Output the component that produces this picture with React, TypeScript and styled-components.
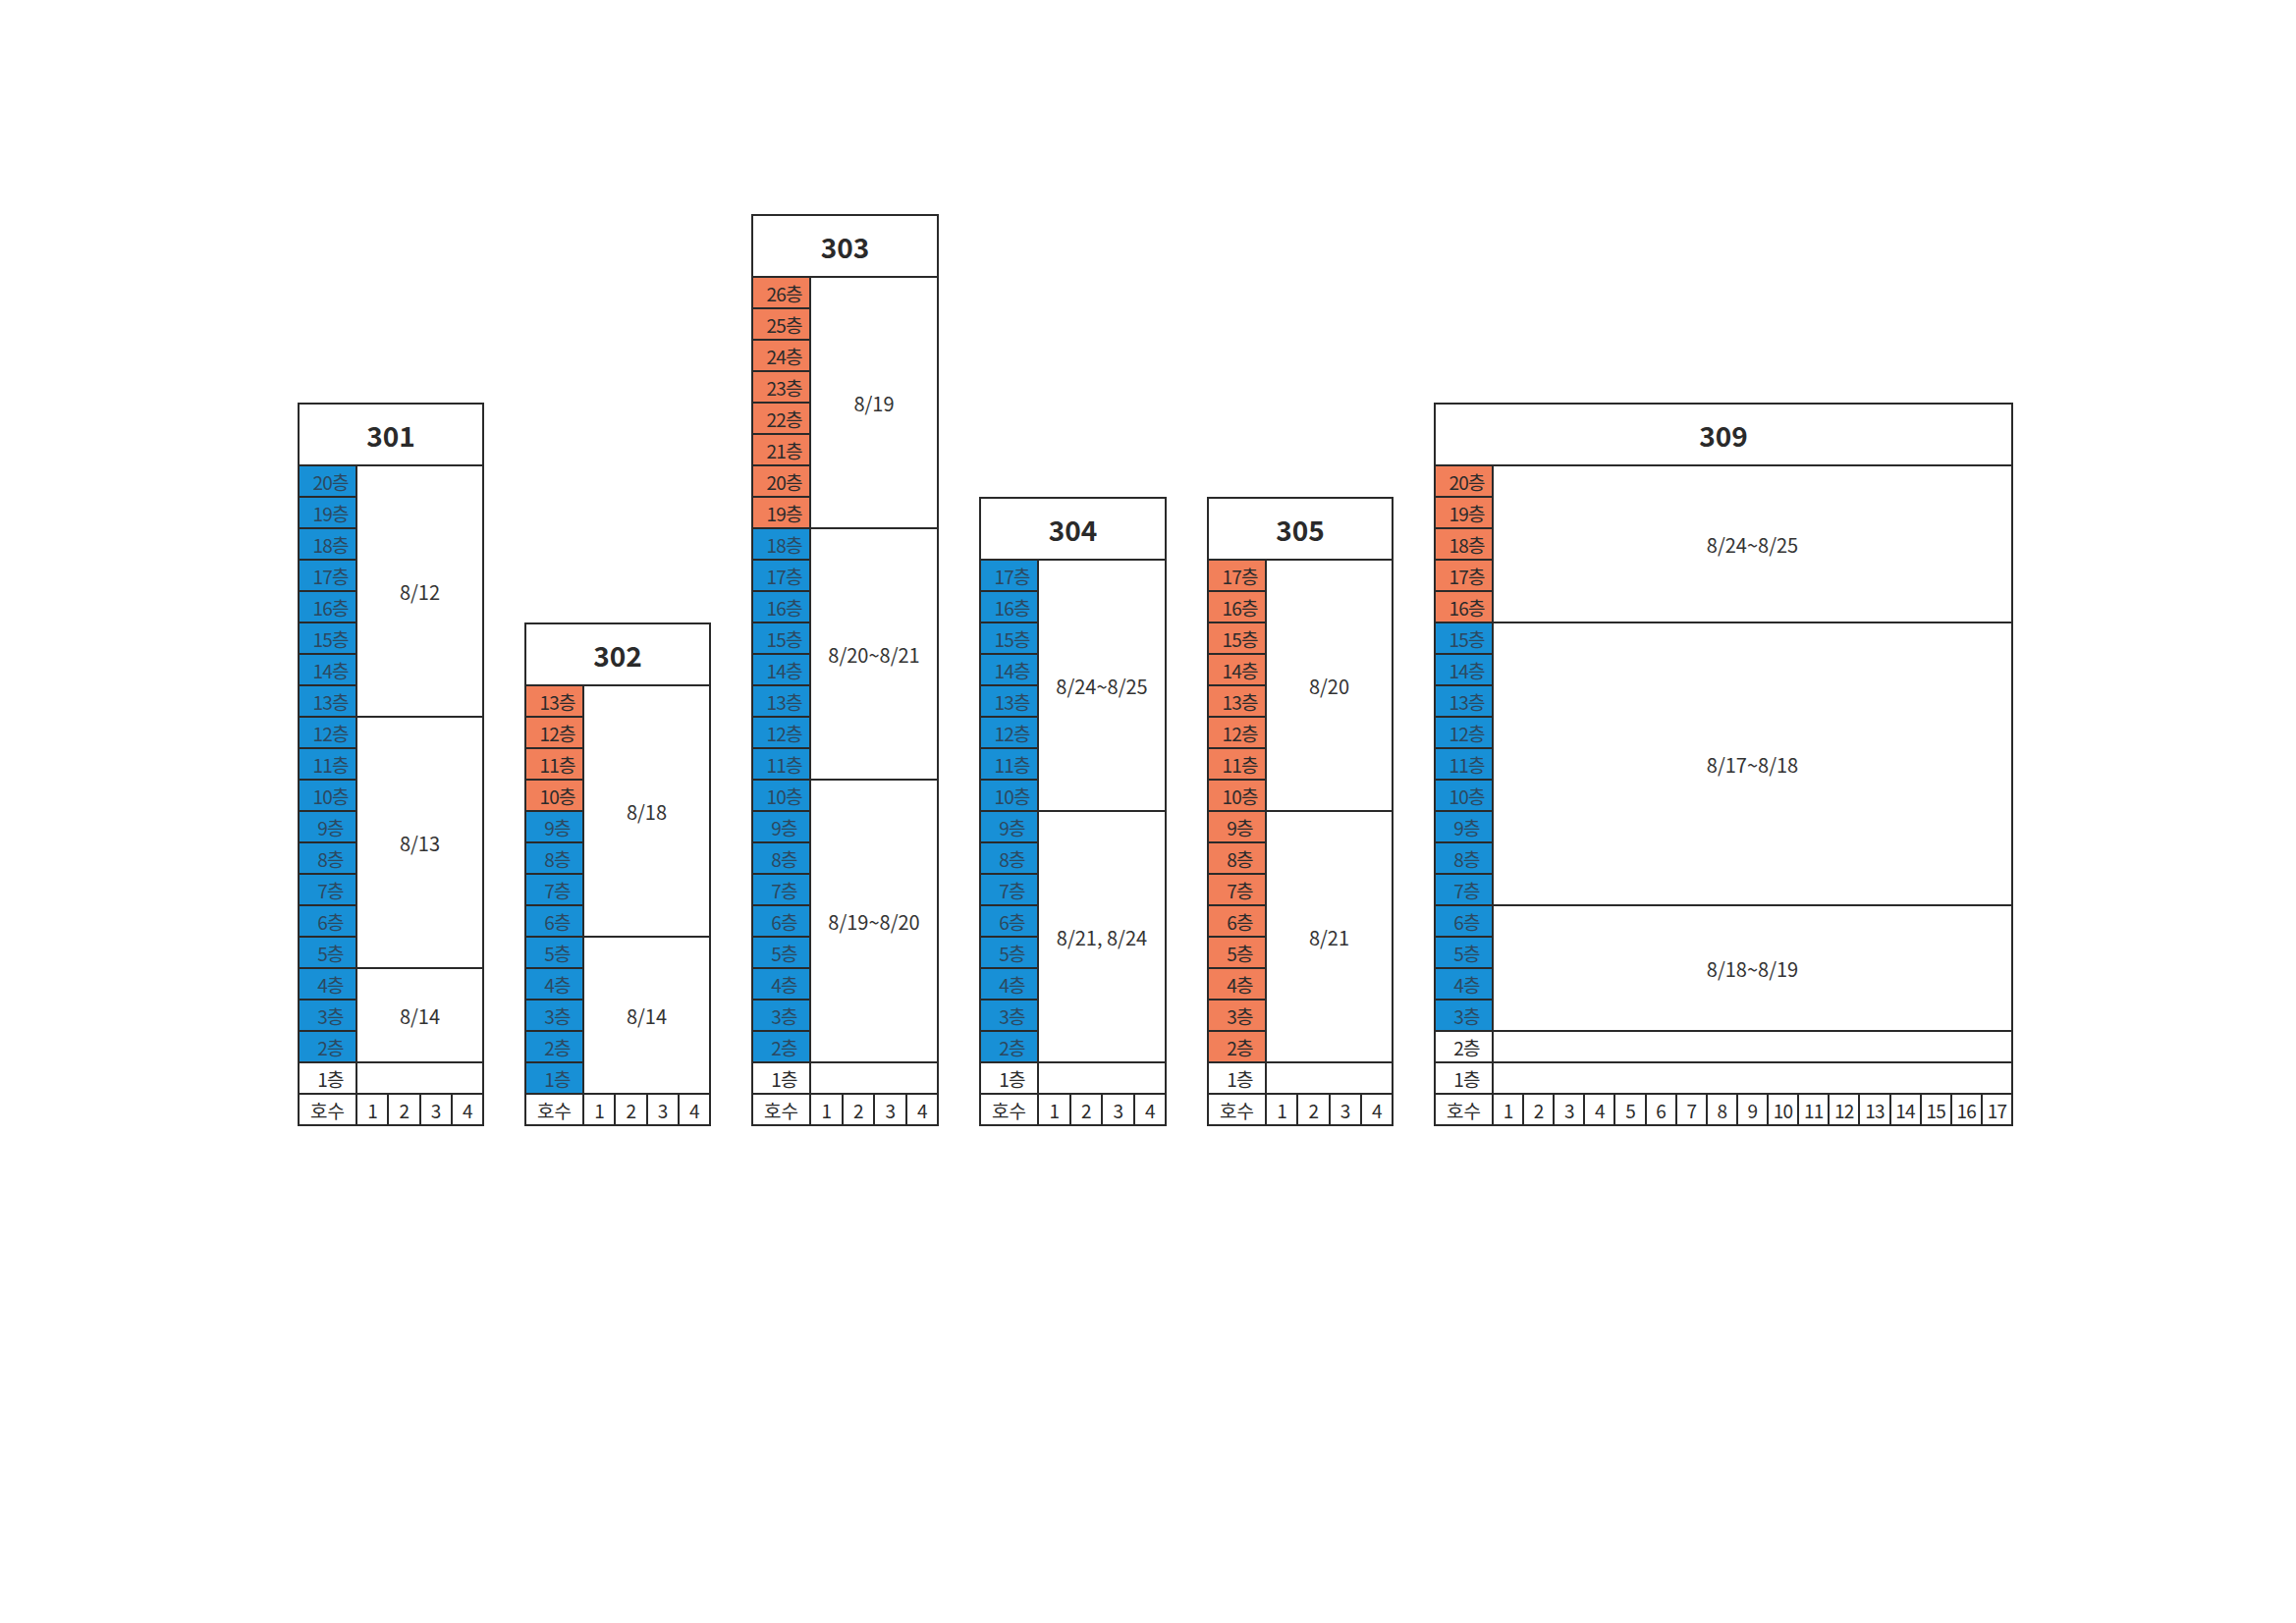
import React from "react";
import styled, { createGlobalStyle } from "styled-components";

const GlobalStyle = createGlobalStyle`
  html, body { margin: 0; padding: 0; background: #ffffff; }
  body { font-family: "Noto Sans CJK KR", "Noto Sans", sans-serif; color: #2b2b2b; }
`;

type Tone = "blue" | "orange" | "none";
type Block = { text: string; span: number };
type BuildingData = {
  name: string;
  units: number;
  width: number;
  floors: { n: number; tone: Tone }[];
  blocks: Block[];
};

const range = (from: number, to: number, tone: Tone) => {
  const out: { n: number; tone: Tone }[] = [];
  for (let i = from; i >= to; i--) out.push({ n: i, tone });
  return out;
};

const buildings: BuildingData[] = [
  {
    name: "301",
    units: 4,
    width: 190,
    floors: [...range(20, 2, "blue"), ...range(1, 1, "none")],
    blocks: [
      { text: "8/12", span: 8 },
      { text: "8/13", span: 8 },
      { text: "8/14", span: 3 },
      { text: "", span: 1 },
    ],
  },
  {
    name: "302",
    units: 4,
    width: 190,
    floors: [...range(13, 10, "orange"), ...range(9, 1, "blue")],
    blocks: [
      { text: "8/18", span: 8 },
      { text: "8/14", span: 5 },
    ],
  },
  {
    name: "303",
    units: 4,
    width: 191,
    floors: [...range(26, 19, "orange"), ...range(18, 2, "blue"), ...range(1, 1, "none")],
    blocks: [
      { text: "8/19", span: 8 },
      { text: "8/20~8/21", span: 8 },
      { text: "8/19~8/20", span: 9 },
      { text: "", span: 1 },
    ],
  },
  {
    name: "304",
    units: 4,
    width: 191,
    floors: [...range(17, 2, "blue"), ...range(1, 1, "none")],
    blocks: [
      { text: "8/24~8/25", span: 8 },
      { text: "8/21, 8/24", span: 8 },
      { text: "", span: 1 },
    ],
  },
  {
    name: "305",
    units: 4,
    width: 190,
    floors: [...range(17, 2, "orange"), ...range(1, 1, "none")],
    blocks: [
      { text: "8/20", span: 8 },
      { text: "8/21", span: 8 },
      { text: "", span: 1 },
    ],
  },
  {
    name: "309",
    units: 17,
    width: 590,
    floors: [...range(20, 16, "orange"), ...range(15, 3, "blue"), ...range(2, 1, "none")],
    blocks: [
      { text: "8/24~8/25", span: 5 },
      { text: "8/17~8/18", span: 9 },
      { text: "8/18~8/19", span: 4 },
      { text: "", span: 1 },
      { text: "", span: 1 },
    ],
  },
];

const LINE = "2px solid #2a2a2a";

const Page = styled.div`
  width: 2338px;
  height: 1653px;
  box-sizing: border-box;
  padding: 218px 0 0 303px;
`;

const Site = styled.div`
  display: flex;
  align-items: flex-end;
  gap: 41px;
`;

const Building = styled.div<{ $width: number; $units: number; $rows: number }>`
  display: grid;
  width: ${(p) => p.$width}px;
  grid-template-columns: 59px repeat(${(p) => p.$units}, 1fr);
  grid-template-rows: 63px repeat(${(p) => p.$rows}, 32px);
  border-top: ${LINE};
  border-left: ${LINE};
  box-sizing: border-box;
  background: #fff;
`;

const Cell = styled.div`
  box-sizing: border-box;
  border-right: ${LINE};
  border-bottom: ${LINE};
  display: flex;
  align-items: center;
  justify-content: center;
  min-width: 0;
  overflow: hidden;
`;

const Header = styled(Cell)`
  grid-column: 1 / -1;
  grid-row: 1;
  font-size: 28px;
  font-weight: 700;
  color: #2a2a2a;
`;

const FloorCell = styled(Cell)<{ $tone: Tone; $row: number }>`
  grid-column: 1;
  grid-row: ${(p) => p.$row};
  font-size: 19px;
  letter-spacing: -0.8px;
  padding-left: 6px;
  background: ${(p) =>
    p.$tone === "blue" ? "#1890d6" : p.$tone === "orange" ? "#f2805a" : "#ffffff"};
  color: ${(p) => (p.$tone === "blue" ? "#2c4860" : "#2b2b2b")};
`;

const DateBlock = styled(Cell)<{ $row: number; $span: number }>`
  grid-column: 2 / -1;
  grid-row: ${(p) => p.$row} / span ${(p) => p.$span};
  font-size: 20px;
  color: #333333;
`;

const UnitLabel = styled(Cell)<{ $row: number }>`
  grid-column: 1;
  grid-row: ${(p) => p.$row};
  font-size: 19px;
  color: #2b2b2b;
`;

const UnitCell = styled(Cell)<{ $row: number }>`
  grid-row: ${(p) => p.$row};
  font-size: 19px;
  color: #2b2b2b;
  letter-spacing: -0.8px;
`;

function BuildingView({ b }: { b: BuildingData }) {
  const rows = b.floors.length + 1;
  let start = 2;
  const blocks = b.blocks.map((bl, i) => {
    const el = (
      <DateBlock key={i} $row={start} $span={bl.span}>
        {bl.text}
      </DateBlock>
    );
    start += bl.span;
    return el;
  });
  const unitRow = b.floors.length + 2;
  return (
    <Building $width={b.width} $units={b.units} $rows={rows}>
      <Header>{b.name}</Header>
      {b.floors.map((f, i) => (
        <FloorCell key={f.n} $tone={f.tone} $row={i + 2}>
          {f.n}층
        </FloorCell>
      ))}
      {blocks}
      <UnitLabel $row={unitRow}>호수</UnitLabel>
      {Array.from({ length: b.units }, (_, i) => (
        <UnitCell key={i} $row={unitRow}>
          {i + 1}
        </UnitCell>
      ))}
    </Building>
  );
}

export default function App() {
  return (
    <Page>
      <GlobalStyle />
      <Site>
        {buildings.map((b) => (
          <BuildingView key={b.name} b={b} />
        ))}
      </Site>
    </Page>
  );
}
